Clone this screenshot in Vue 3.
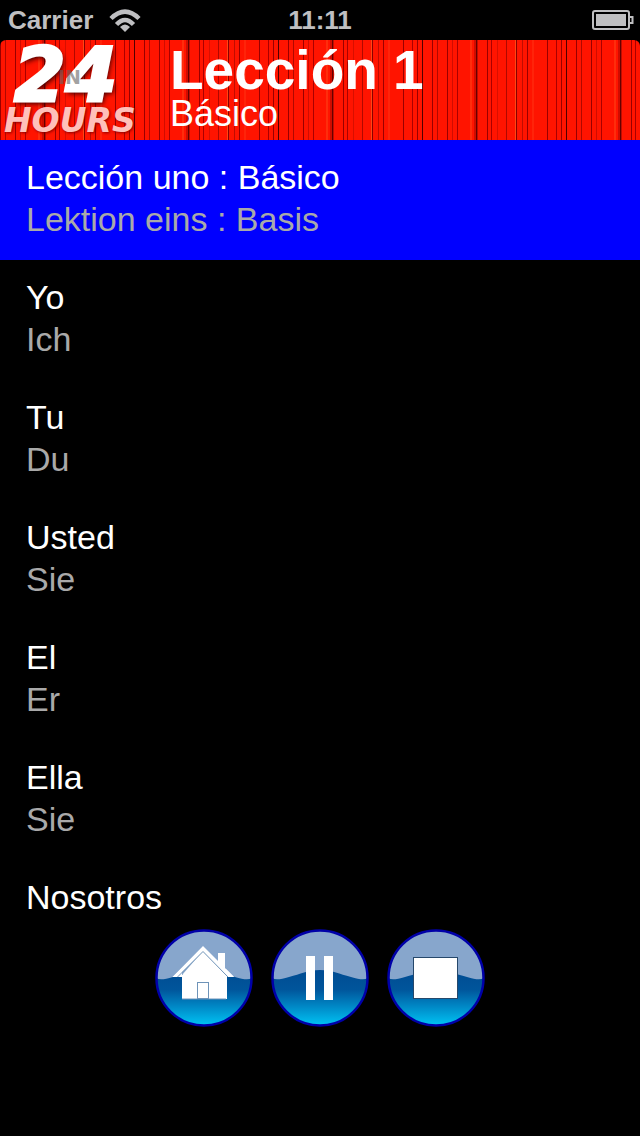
<script setup>
import { ref } from 'vue'

const phrases = [
  { es: 'Lección uno : Básico', de: 'Lektion eins : Basis' },
  { es: 'Yo', de: 'Ich' },
  { es: 'Tu', de: 'Du' },
  { es: 'Usted', de: 'Sie' },
  { es: 'El', de: 'Er' },
  { es: 'Ella', de: 'Sie' },
  { es: 'Nosotros', de: '' },
]
const current = ref(0)
const controls = [
  { id: 'home', label: 'Home' },
  { id: 'pause', label: 'Pause' },
  { id: 'stop', label: 'Stop' },
]
</script>

<template>
  <div class="screen">
    <div class="status">
      <div class="carrier">
        <span>Carrier</span>
        <svg class="wifi" viewBox="0 0 32 23" aria-hidden="true">
          <g fill="none" stroke="#bfbfc1" stroke-width="4.500">
            <path d="M2 9.500Q16 -4.500 30 9.500" />
            <path d="M7.500 15.500Q16 6.500 24.500 15.500" />
          </g>
          <path d="M11 18Q16 13 21 18L16 23Z" fill="#bfbfc1" />
        </svg>
      </div>
      <span>11:11</span>
      <svg class="battery" viewBox="0 0 42 20" aria-hidden="true">
        <rect x="1" y="1" width="36" height="18" rx="2" fill="none" stroke="#bfbfc1" stroke-width="2" />
        <rect x="4" y="4" width="30" height="12" fill="#bfbfc1" />
        <path d="M38 7h2.500v6H38" fill="none" stroke="#bfbfc1" stroke-width="2" />
      </svg>
    </div>

    <header class="banner">
      <div class="logo">
        <span class="in">IN</span>
        <span class="num">24</span>
        <span class="hours">HOURS</span>
      </div>
      <div class="titles">
        <h1>Lección 1</h1>
        <p>Básico</p>
      </div>
    </header>

    <ul class="list">
      <li v-for="(p, i) in phrases" :key="i">
        <button class="row" :class="{ active: i === current }" @click="current = i">
          <span class="es">{{ p.es }}</span>
          <span v-if="p.de" class="de">{{ p.de }}</span>
        </button>
      </li>
    </ul>

    <footer class="player">
      <button v-for="c in controls" :key="c.id" class="control" :aria-label="c.label">
        <svg viewBox="0 0 98 98" aria-hidden="true">
          <defs>
            <linearGradient :id="'water-' + c.id" x1="0" y1="0" x2="0" y2="1">
              <stop offset="0.4" stop-color="#004a91" />
              <stop offset="0.62" stop-color="#00559b" />
              <stop offset="0.8" stop-color="#0088c6" />
              <stop offset="1" stop-color="#00c4f4" />
            </linearGradient>
          </defs>
          <circle cx="49" cy="49" r="47.500" :fill="'url(#water-' + c.id + ')'" />
          <path d="M1.500 49A47.500 47.500 0 0 1 96.500 49Q93 52 80 48C68 45 62 41 49 41S30 45 18 48Q5 52 1.500 49Z" fill="#87a6cc" />
          <circle cx="49" cy="49" r="47.500" fill="none" stroke="#0000a8" stroke-width="2.500" />
          <template v-if="c.id === 'home'">
            <path d="M48 22L72 46V70H27V46Z" fill="#fff" />
            <path d="M63 24H70V43L63 36Z" fill="#fff" />
            <path d="M17.500 48L48 17L79 48H73L48 23L22 48Z" fill="#fff" />
            <path d="M71 48H79L71 40Z M27 48H17.500L27 39Z" fill="#fff" />
            <path d="M22.500 48L48 22.500L73 48" fill="none" stroke="#6e93b8" stroke-width="1" />
            <path d="M27 70H71" stroke="#6e93b8" stroke-width="1" />
            <rect x="42.500" y="53.500" width="11" height="16" fill="#fff" stroke="#6e93b8" />
          </template>
          <template v-else-if="c.id === 'pause'">
            <rect x="35" y="27" width="9" height="44" fill="#fff" />
            <rect x="53" y="27" width="9" height="44" fill="#fff" />
          </template>
          <rect v-else x="26.500" y="28.500" width="44" height="41" fill="#fff" stroke="#26486b" />
        </svg>
      </button>
    </footer>
  </div>
</template>

<style>
body {
  background: #000;
}
</style>

<style scoped>
.screen {
  display: flex;
  flex-direction: column;
  height: 100vh;
  overflow: hidden;
  background: #000;
  color: #fff;
  font-family: "Liberation Sans", Arial, sans-serif;
}
.status {
  display: grid;
  grid-template-columns: 1fr auto 1fr;
  align-items: center;
  height: 40px;
  flex: none;
  box-sizing: border-box;
  padding: 0 6px;
  color: #bfbfc1;
  font-size: 26px;
  font-weight: bold;
}
.carrier {
  display: flex;
  align-items: center;
  gap: 16px;
  padding-left: 2px;
}
.wifi {
  width: 32px;
  height: 23px;
}
.battery {
  width: 42px;
  height: 20px;
  justify-self: end;
}
.banner {
  display: flex;
  flex: none;
  height: 100px;
  border-radius: 6px 6px 0 0;
  background-color: #ff1400;
  background-image: linear-gradient(
    90deg,
    #500000 0 1px, #ff1400 1px 10px,
    #900 10px 11px, #ff1400 11px 15px,
    #b00800 15px 16px, #ff1400 16px 25px,
    #900 25px 26px, #ff1400 26px 30px,
    #d00c00 30px 31px, #ff1400 31px 35px,
    #a00 35px 36px, #ff1400 36px 48px,
    #ff2d0c 48px 50px, #ff1400 50px 52px,
    #d00c00 52px 54px, #600 54px 55px, #c00c00 55px 56px, #ff1400 56px 65px,
    #900 65px 66px, #ff1400 66px 69px,
    #a00 69px 70px, #ff1400 70px 75px,
    #d80f00 75px 76px, #ff1400 76px 84px,
    #b00800 84px 85px, #ff1400 85px 93px,
    #ff4614 93px 94px, #800 94px 95px, #ff1400 95px 100px,
    #c00c00 100px 101px, #ff1400 101px 105px,
    #900 105px 106px, #ff1400 106px 110px,
    #ff240a 110px 112px, #ff1400 112px 125px,
    #900 125px 126px, #ff1400 126px 134px,
    #a00 134px 135px, #ff1400 135px 139px,
    #900 139px 140px, #ff1400 140px 144px
  );
  background-size: 144px 100%;
  background-position: -10px 0;
}
.logo {
  position: relative;
  display: flex;
  flex-direction: column;
  flex: none;
  width: 170px;
  font-family: "DejaVu Sans", sans-serif;
  font-weight: bold;
  font-style: oblique;
}
.num {
  padding-left: 14px;
  font-size: 74px;
  line-height: 70px;
  -webkit-text-stroke: 3px #fff;
  text-shadow: 2px 3px 5px #400;
}
.hours {
  padding-left: 4px;
  font-size: 33px;
  line-height: 22px;
  color: #ffc0ba;
  text-shadow: 1px 1px 3px #800;
}
.in {
  position: absolute;
  left: 58px;
  top: 26px;
  z-index: 1;
  font-size: 19px;
  line-height: 22px;
  font-style: normal;
  color: rgba(100, 100, 100, 0.6);
}
.titles {
  min-width: 0;
  white-space: nowrap;
}
h1 {
  margin: 0;
  font-size: 55px;
  line-height: 60px;
}
p {
  margin: 0;
  font-size: 36px;
  line-height: 28px;
}
.list {
  flex: 1;
  min-height: 0;
  overflow: hidden;
  margin: 0;
  padding: 0;
  list-style: none;
}
.row {
  display: flex;
  flex-direction: column;
  width: 100%;
  height: 120px;
  padding: 16px 26px 0;
  border: 0;
  background: transparent;
  color: #fff;
  font-family: inherit;
  font-size: 34px;
  line-height: 42px;
  text-align: left;
}
.row.active {
  background: #00f;
}
.de {
  color: #a9a9a9;
}
.player {
  display: flex;
  flex: none;
  justify-content: center;
  gap: 18px;
  padding: 8px 0 109px;
}
.control {
  width: 98px;
  height: 98px;
  padding: 0;
  border: 0;
  border-radius: 50%;
  background: transparent;
}
.control svg {
  display: block;
  width: 100%;
  height: 100%;
}
</style>
